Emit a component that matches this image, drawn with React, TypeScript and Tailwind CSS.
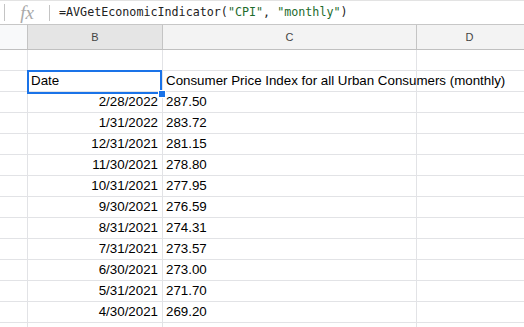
import React from 'react'

const rows: [string, string][] = [
  ['2/28/2022', '287.50'],
  ['1/31/2022', '283.72'],
  ['12/31/2021', '281.15'],
  ['11/30/2021', '278.80'],
  ['10/31/2021', '277.95'],
  ['9/30/2021', '276.59'],
  ['8/31/2021', '274.31'],
  ['7/31/2021', '273.57'],
  ['6/30/2021', '273.00'],
  ['5/31/2021', '271.70'],
  ['4/30/2021', '269.20'],
  ['', ''],
]

const cols = 'grid grid-cols-[28px_135px_254px_1fr]'
const cell = 'border-r border-[#e2e3e6] flex items-end pb-[3px] whitespace-nowrap overflow-visible'

export default function App() {
  return (
    <div className="w-[524px] h-[327px] overflow-hidden bg-white text-black" style={{ fontFamily: '"Liberation Sans", Arial, sans-serif' }}>
      {/* formula bar */}
      <div className="h-[25px] border-t border-b border-[#c7c7c7] border-t-[#e3e3e3] flex items-center">
        <div className="w-[5px] h-[17px] border-r border-[#c4c4c4]" />
        <div className="w-[44px] flex justify-center">
          <span className="text-[#a9a9a9] text-[19px] italic leading-none" style={{ fontFamily: '"Liberation Serif", serif' }}>fx</span>
        </div>
        <div className="w-px h-[16px] bg-[#c4c4c4]" />
        <div className="pl-[9px] text-[11.7px] text-[#222]" style={{ fontFamily: '"DejaVu Sans Mono", monospace' }}>
          =AVGetEconomicIndicator(<span className="text-[#1d6b2c]">"CPI"</span>, <span className="text-[#1d6b2c]">"monthly"</span>)
        </div>
      </div>

      {/* column headers */}
      <div className={`${cols} h-[25px] border-b border-[#c0c0c0] text-[11px] text-[#444]`}>
        <div className="bg-[#f8f9fa] border-r border-[#c4c4c4]" />
        <div className="bg-[#e5e5e5] border-r border-[#c4c4c4] flex items-center justify-center">B</div>
        <div className="bg-[#f3f3f3] border-r border-[#c4c4c4] flex items-center justify-center">C</div>
        <div className="bg-[#f3f3f3] flex items-center justify-center pr-[2px]">D</div>
      </div>

      {/* blank row */}
      <div className={`${cols} h-[21px] border-b border-[#e2e3e6]`}>
        <div className={cell} />
        <div className={cell} />
        <div className={cell} />
        <div />
      </div>

      {/* title row */}
      <div className={`${cols} h-[21px] border-b border-[#e2e3e6] text-[13.33px]`}>
        <div className={cell} />
        <div className={`${cell} relative pl-[3px]`}>
          Date
          <div className="absolute -left-px -top-px right-0 bottom-0 border-2 border-[#1a73e8]" />
          <div className="absolute -right-[3px] -bottom-[3px] w-[6px] h-[6px] bg-[#1a73e8] outline outline-1 outline-white" />
        </div>
        <div className={`${cell} pl-[3px] relative z-10`}>Consumer Price Index for all Urban Consumers (monthly)</div>
        <div />
      </div>

      {rows.map(([d, v], i) => (
        <div key={i} className={`${cols} h-[21px] border-b border-[#e2e3e6] text-[13.33px]`}>
          <div className={cell} />
          <div className={`${cell} justify-end pr-[4px]`}>{d}</div>
          <div className={`${cell} pl-[3px]`}>{v}</div>
          <div />
        </div>
      ))}
    </div>
  )
}
